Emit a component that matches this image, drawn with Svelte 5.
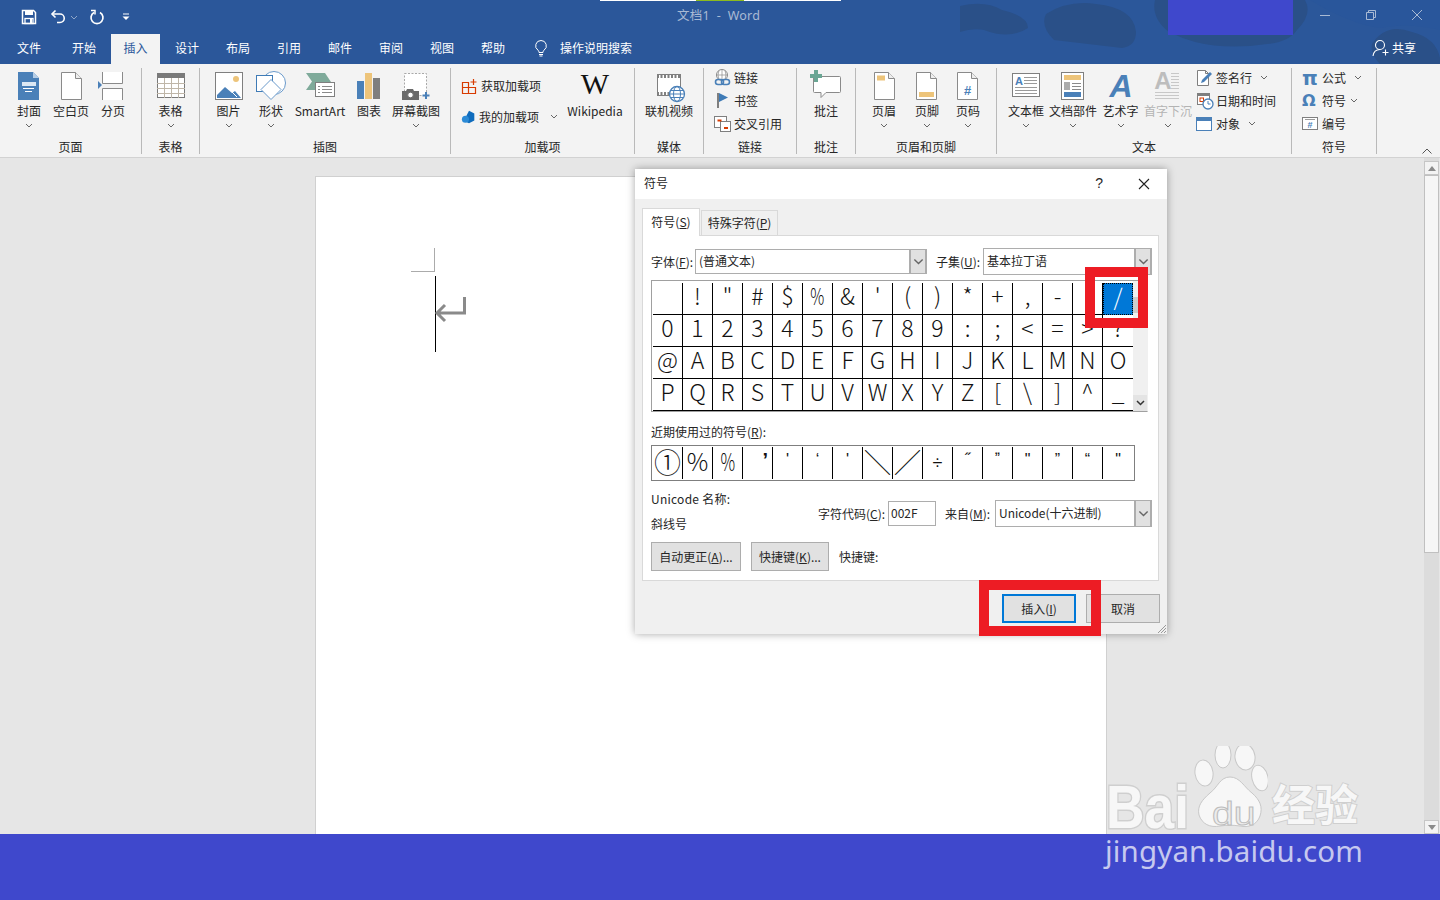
<script>
  const tabs = ['文件','开始','插入','设计','布局','引用','邮件','审阅','视图','帮助'];
  const rows = [
    [' ','!','"','#','$','%','&',"'",'(',')','*','+',',','-','.','/'],
    ['0','1','2','3','4','5','6','7','8','9',':',';','<','=','>','?'],
    ['@','A','B','C','D','E','F','G','H','I','J','K','L','M','N','O'],
    ['P','Q','R','S','T','U','V','W','X','Y','Z','[','\\',']','^','_']
  ];
  const chars = rows.flat();
  const recent = ['①','%','%','’',"'",'‘',"'",'╲','╱','÷','˝','ˮ','"','”','“','"'];
</script>

{#snippet chev()}
  <svg class="chev" viewBox="0 0 8 5"><path d="M1 1l3 3 3-3" fill="none" stroke="#666" stroke-width="1"/></svg>
{/snippet}

{#snippet big(label, w, icon, hasChev = true, dim = false)}
  <div class="big" class:dim style="width:{w}px">
    {@render icon()}
    <span class="blabel">{label}</span>
    {#if hasChev}{@render chev()}{/if}
  </div>
{/snippet}

{#snippet small(label, icon, caret = 0)}
  <div class="small">
    <span class="sicon">{@render icon()}</span>
    <span>{label}</span>
    {#if caret}<span class="scaret" style="margin-left:{caret}px">{@render chev()}</span>{/if}
  </div>
{/snippet}

{#snippet iCover()}<svg class="ic" viewBox="0 0 44 34"><path d="M11 4h15l6 6v22H11z" fill="#4a80b8"/><path d="M26 4l6 6h-6z" fill="#b5cde6"/><rect x="15" y="14" width="14" height="4" fill="#dce8f3"/><path d="M16 20.5h11M18 23.5h7" stroke="#fff"/></svg>{/snippet}
{#snippet iBlank()}<svg class="ic" viewBox="0 0 44 34"><path d="M12.5 4.5h14l6 6v21h-20z" fill="#fff" stroke="#8a8a8a"/><path d="M26.5 4.5v6h6" fill="#eee" stroke="#8a8a8a"/></svg>{/snippet}
{#snippet iBreak()}<svg class="ic" viewBox="0 0 44 34"><path d="M11.5 4v11.5h20V4M11.5 32V20.5h20V32" fill="#fff" stroke="#8a8a8a"/><path d="M7 13l4 4-4 4z" fill="#4a80b8"/></svg>{/snippet}
{#snippet iTable()}<svg class="ic" viewBox="0 0 44 34"><rect x="8.5" y="5.5" width="27" height="24" fill="#fff" stroke="#7a7a7a"/><rect x="8" y="5" width="28" height="5" fill="#7a7a7a"/><path d="M8 15.5h28M8 20.5h28M8 25.5h28M15.5 10v20M22.5 10v20M29.5 10v20" stroke="#bfb6a8" fill="none"/></svg>{/snippet}
{#snippet iPic()}<svg class="ic" viewBox="0 0 44 34"><rect x="8.5" y="4.5" width="27" height="27" fill="#fff" stroke="#7f7f7f"/><circle cx="29" cy="11" r="3" fill="#edc47a"/><path d="M10 30v-3l8-8 7 6 3-2 6 7z" fill="#4a80b8"/><path d="M21 20l9 9" stroke="#fff"/></svg>{/snippet}
{#snippet iShape()}<svg class="ic" viewBox="0 0 44 34"><circle cx="25" cy="15" r="11.5" fill="#fff" stroke="#6a9acb"/><rect x="7.5" y="7.5" width="16" height="16" fill="#fff" stroke="#3f7bb6"/><path d="M22 11.5l10 10-10 10-10-10z" fill="#fff" stroke="#6a9acb"/></svg>{/snippet}
{#snippet iSmart()}<svg class="ic" viewBox="0 0 44 34"><path d="M8 5h19l6 9H17v8H8l6-8.500z" fill="#7faa9a"/><rect x="17.500" y="14.500" width="19" height="14" fill="#fff" stroke="#7f7f7f"/><path d="M20 18.500h2M24 18.500h10M20 21.500h2M24 21.500h10M20 24.500h2M24 24.500h10" stroke="#8a8a8a"/></svg>{/snippet}
{#snippet iChart()}<svg class="ic" viewBox="0 0 44 34"><rect x="10" y="13" width="7" height="18" fill="#4a80b8"/><rect x="18" y="5" width="7" height="26" fill="#edc47a"/><rect x="26" y="10" width="7" height="21" fill="#7f7f7f"/></svg>{/snippet}
{#snippet iShot()}<svg class="ic" viewBox="0 0 44 34"><rect x="10.500" y="5.500" width="22" height="22" fill="#fff" stroke="#a8a8a8" stroke-dasharray="2 1.500"/><path d="M8 23h4l1-2h6l1 2h5v9H8z" fill="#6a6a6a"/><circle cx="16.500" cy="27" r="2.800" fill="#fff" stroke="#6a6a6a"/><path d="M32 24v7M28.500 27.500h7" stroke="#4a80b8" stroke-width="2"/></svg>{/snippet}
{#snippet iW()}<span class="wlogo">W</span>{/snippet}
{#snippet iVideo()}<svg class="ic" viewBox="0 0 44 34"><rect x="10.500" y="6.500" width="23" height="21" fill="#fff" stroke="#7f7f7f"/><path d="M10 8.500h24M10 25.500h24" stroke="#7f7f7f" stroke-width="3" stroke-dasharray="2 1.500"/><circle cx="30" cy="26" r="7.500" fill="#fff" stroke="#4a80b8" stroke-width="1.300"/><ellipse cx="30" cy="26" rx="3.500" ry="7.500" fill="none" stroke="#4a80b8"/><path d="M22.500 26h15M23.500 22.500h13M23.500 29.500h13" stroke="#4a80b8"/></svg>{/snippet}
{#snippet iComment()}<svg class="ic" viewBox="0 0 44 34"><path d="M9.500 8.500h26a1 1 0 0 1 1 1v14a1 1 0 0 1-1 1H22l-5 5v-5H10.500a1 1 0 0 1-1-1z" fill="#fff" stroke="#8a8a8a"/><path d="M12 2v12M6 8h12" stroke="#6aa694" stroke-width="4"/></svg>{/snippet}
{#snippet iHead()}<svg class="ic" viewBox="0 0 44 34"><path d="M12.500 4.500h14l6 6v21h-20z" fill="#fff" stroke="#8a8a8a"/><path d="M26.500 4.500v6h6" fill="#eee" stroke="#8a8a8a"/><rect x="15" y="7.500" width="8" height="5" fill="#edc47a"/></svg>{/snippet}
{#snippet iFoot()}<svg class="ic" viewBox="0 0 44 34"><path d="M11.500 4.500h14l6 6v21h-20z" fill="#fff" stroke="#8a8a8a"/><path d="M25.500 4.500v6h6" fill="#eee" stroke="#8a8a8a"/><rect x="14" y="24" width="15" height="5" fill="#edc47a"/></svg>{/snippet}
{#snippet iNum()}<svg class="ic" viewBox="0 0 44 34"><path d="M11.500 4.500h14l6 6v21h-20z" fill="#fff" stroke="#8a8a8a"/><path d="M25.500 4.500v6h6" fill="#eee" stroke="#8a8a8a"/><text x="21.500" y="27" class="svgt" font-size="13" font-weight="700" fill="#4a80b8" text-anchor="middle">#</text></svg>{/snippet}
{#snippet iTextbox()}<svg class="ic" viewBox="0 0 44 34"><rect x="8.500" y="5.500" width="27" height="23" fill="#fff" stroke="#7f7f7f"/><text x="15" y="17" class="svgt" font-size="11" font-weight="700" fill="#4a80b8" text-anchor="middle">A</text><path d="M20 9.500h13M20 12.500h13M20 15.500h13M11 19.500h22M11 22.500h22M11 25.500h22" stroke="#9a9a9a"/></svg>{/snippet}
{#snippet iParts()}<svg class="ic" viewBox="0 0 44 34"><rect x="10.500" y="4.500" width="22" height="27" fill="#fff" stroke="#7f7f7f"/><rect x="13" y="7" width="17" height="5" fill="#edc47a"/><rect x="13" y="14" width="6" height="8" fill="#ababab"/><path d="M21 15.500h9M21 18.500h9M21 21.500h9" stroke="#8a8a8a"/><rect x="13" y="24" width="17" height="5" fill="#4a80b8"/></svg>{/snippet}
{#snippet iArt()}<svg class="ic" viewBox="0 0 44 34"><text x="22" y="29" class="svgt" font-size="32" font-weight="700" font-style="italic" fill="#4a80b8" text-anchor="middle">A</text></svg>{/snippet}
{#snippet iDrop()}<svg class="ic" viewBox="0 0 44 34"><text x="17" y="21" class="svgt" font-size="24" font-weight="700" fill="#bdbdbd" text-anchor="middle">A</text><path d="M25 5.500h8M25 8.500h8M25 11.500h8M25 14.500h8M25 17.500h8M25 20.500h8M9 24.500h24M9 27.500h24M9 30.500h24" stroke="#c8c8c8"/></svg>{/snippet}

{#snippet sGet()}<svg width="18" height="18" viewBox="0 0 18 18"><path d="M1.500 5.500h6v5h-6zM1.500 10.500h6v6h-6zM7.500 10.500h7v6h-7zM7.500 5.500v5" fill="none" stroke="#d83b01" stroke-width="1.200"/><path d="M12.500 2v6M9.500 5h6" stroke="#d83b01" stroke-width="1.200"/></svg>{/snippet}
{#snippet sMine()}<svg width="18" height="18" viewBox="0 0 18 18"><path d="M9 2l6 3v8l-6 3-3-1.500V8z" fill="#0f6cbd"/><circle cx="5" cy="11.500" r="4" fill="#2b8ad6"/></svg>{/snippet}
{#snippet sLink()}<svg width="18" height="18" viewBox="0 0 18 18"><circle cx="8" cy="6" r="5.500" fill="#fff" stroke="#8a8a8a"/><path d="M2.500 6h11M8 .5v11M5 1.500q-2 4.500 0 9M11 1.500q2 4.500 0 9" stroke="#8a8a8a" fill="none" stroke-width=".7"/><rect x="1.500" y="10.500" width="8" height="5" rx="2.500" fill="none" stroke="#4a80b8" stroke-width="1.600"/><rect x="7.500" y="10.500" width="8" height="5" rx="2.500" fill="none" stroke="#4a80b8" stroke-width="1.600"/></svg>{/snippet}
{#snippet sMark()}<svg width="18" height="18" viewBox="0 0 18 18"><path d="M4 1v15" stroke="#7f7f7f" stroke-width="2"/><path d="M5 1l9 4.500L5 10z" fill="#3f7bb6"/></svg>{/snippet}
{#snippet sRef()}<svg width="18" height="18" viewBox="0 0 18 18"><rect x=".5" y="1.500" width="12" height="11" fill="#fff" stroke="#7f7f7f"/><rect x="6.500" y="6.500" width="10" height="10" fill="#fff" stroke="#7f7f7f"/><path d="M3.500 5.500h4M10 13h4" stroke="#d83b01" stroke-width="2"/></svg>{/snippet}
{#snippet sSig()}<svg width="18" height="18" viewBox="0 0 18 18"><path d="M1.500 1.500h8l3 3v12h-11z" fill="#fff" stroke="#7f7f7f"/><path d="M9.500 1.500v3h3" fill="none" stroke="#7f7f7f"/><path d="M5 14l1-3 8-8 2 2-8 8z" fill="#4a80b8"/></svg>{/snippet}
{#snippet sDate()}<svg width="18" height="18" viewBox="0 0 18 18"><rect x="1.500" y="1.500" width="12" height="11" fill="#fff" stroke="#7f7f7f"/><rect x="1" y="1" width="13" height="3" fill="#7f7f7f"/><rect x="4" y="6" width="3.500" height="3.500" fill="none" stroke="#d83b01"/><circle cx="12" cy="12" r="5" fill="#fff" stroke="#4a80b8" stroke-width="1.300"/><path d="M12 9v3h2.500" fill="none" stroke="#4a80b8"/></svg>{/snippet}
{#snippet sObj()}<svg width="18" height="18" viewBox="0 0 18 18"><rect x=".5" y="2.500" width="15" height="13" fill="#fff" stroke="#4a80b8"/><rect x="0" y="2" width="16" height="4" fill="#4a80b8"/></svg>{/snippet}
{#snippet sPi()}<span class="glyph pi">π</span>{/snippet}
{#snippet sOm()}<span class="glyph">Ω</span>{/snippet}
{#snippet sNo()}<svg width="18" height="16" viewBox="0 0 18 16"><rect x=".5" y="1.500" width="15" height="12" fill="#fff" stroke="#7f7f7f"/><path d="M3 3.500h10" stroke="#9a9a9a"/><text x="8" y="12" class="svgt" font-size="9" font-weight="700" fill="#4a80b8" text-anchor="middle">#</text></svg>{/snippet}

<div class="app">
  <header class="head">
    <svg class="clouds" viewBox="960 0 480 64" preserveAspectRatio="none">
      <path d="M960 6q25-6 42 4 26 6 26 18-18 12-44 2-12-2-24 2zM1046 14q22-14 50-10 38 4 40 28 0 14-14 16-34-4-68-8-14-14-8-26zM1155 0h150q8 14-8 30-8 12-30 14-40 6-72-2-14-4-26-10-18-14-14-32zM1372 44q14-22 40-12 24 6 28 26v6h-60q-10-10-8-20z" fill="#2a5088"/>
      <path d="M1310 0h130v30q-34-8-60-2-30-4-70-28z" fill="#29569b"/>
    </svg>
    <div class="progress"><span class="pgreen"></span></div>
    <div class="purple"></div>

    <div class="titlerow">
      <div class="qat">
        <svg class="q1" width="16" height="16" viewBox="0 0 16 16"><path d="M1.500 1.500h11l2 2v11h-13z" fill="none" stroke="#fff" stroke-width="1.500"/><rect x="4" y="2" width="8" height="4" fill="#fff"/><rect x="4" y="9.500" width="8" height="5" fill="none" stroke="#fff" stroke-width="1.300"/><rect x="9" y="10" width="2" height="4" fill="#fff"/></svg>
        <svg class="q2" width="16" height="16" viewBox="0 0 16 16"><path d="M5.500 1.500L2 5l3.500 3.500" fill="none" stroke="#fff" stroke-width="1.600"/><path d="M2.500 5H10a4 4 0 0 1 0 8.500H7" fill="none" stroke="#fff" stroke-width="1.600"/></svg>
        <svg class="q3" width="8" height="5" viewBox="0 0 8 5"><path d="M1 1l3 3 3-3" fill="none" stroke="#8fa6c8"/></svg>
        <svg class="q4" width="16" height="16" viewBox="0 0 16 16"><path d="M5 3.500a6 6 0 1 0 6 0" fill="none" stroke="#fff" stroke-width="1.700"/><path d="M2 1.500h4v4" fill="none" stroke="#fff" stroke-width="1.500"/></svg>
        <svg class="q5" width="8" height="8" viewBox="0 0 8 8"><path d="M1 1h6" stroke="#fff"/><path d="M.5 3.500h7L4 7z" fill="#fff"/></svg>
      </div>
      <div class="doctitle">文档1 &nbsp;-&nbsp; Word</div>
      <div class="winctl">
        <span class="wbtn"><svg width="12" height="12" viewBox="0 0 12 12"><path d="M1 6.500h10" stroke="#a9bad4"/></svg></span>
        <span class="wbtn"><svg width="12" height="12" viewBox="0 0 12 12"><path d="M1.500 3.500h7v7h-7zM3.500 3.500v-2h7v7h-2" fill="none" stroke="#a9bad4"/></svg></span>
        <span class="wbtn"><svg width="12" height="12" viewBox="0 0 12 12"><path d="M1 1l10 10M11 1L1 11" stroke="#a9bad4"/></svg></span>
      </div>
    </div>

    <div class="tabrow">
      <nav class="tabs">
        {#each tabs as t}
          <span class="tab" class:on={t === '插入'}>{t}</span>
        {/each}
      </nav>
      <svg class="bulb" width="14" height="18" viewBox="0 0 14 18"><path d="M7 1.500a5.300 5.300 0 0 0-3 9.700c.7.600 1 1.300 1 2.300h4c0-1 .3-1.700 1-2.300a5.300 5.300 0 0 0-3-9.700zM5 15.500h4M5.500 17h3" fill="none" stroke="#fff"/></svg>
      <span class="search">操作说明搜索</span>
      <span class="share">
        <svg width="18" height="18" viewBox="0 0 18 18"><circle cx="8" cy="6" r="4.500" fill="none" stroke="#fff" stroke-width="1.100"/><path d="M1 17c.5-4 3-6.500 7-6.500M13.500 10.500v6M10.500 13.500h6" fill="none" stroke="#fff" stroke-width="1.100"/></svg>
        共享
      </span>
    </div>
  </header>

  <section class="ribbon">
    <div class="group" style="width:142px">
      <div class="gbody pl8">
        {@render big('封面', 42, iCover)}
        {@render big('空白页', 42, iBlank, false)}
        {@render big('分页', 42, iBreak, false)}
      </div>
      <div class="glabel">页面</div>
    </div>
    <div class="group" style="width:58px">
      <div class="gbody center">{@render big('表格', 44, iTable)}</div>
      <div class="glabel">表格</div>
    </div>
    <div class="group" style="width:251px">
      <div class="gbody pl7">
        {@render big('图片', 43, iPic)}
        {@render big('形状', 42, iShape)}
        {@render big('SmartArt', 56, iSmart, false)}
        {@render big('图表', 42, iChart, false)}
        {@render big('屏幕截图', 52, iShot)}
      </div>
      <div class="glabel">插图</div>
    </div>
    <div class="group" style="width:184px">
      <div class="gbody">
        <div class="addins">
          <div class="addin">{@render sGet()}<span>获取加载项</span></div>
          <div class="addin">{@render sMine()}<span>我的加载项</span><span class="scaret addcaret">{@render chev()}</span></div>
        </div>
        {@render big('Wikipedia', 74, iW, false)}
      </div>
      <div class="glabel">加载项</div>
    </div>
    <div class="group" style="width:69px">
      <div class="gbody center">{@render big('联机视频', 52, iVideo, false)}</div>
      <div class="glabel">媒体</div>
    </div>
    <div class="group" style="width:93px">
      <div class="gbody stackwrap pl10">
        <div class="stack">
          {@render small('链接', sLink)}
          {@render small('书签', sMark)}
          {@render small('交叉引用', sRef)}
        </div>
      </div>
      <div class="glabel">链接</div>
    </div>
    <div class="group" style="width:59px">
      <div class="gbody center">{@render big('批注', 44, iComment, false)}</div>
      <div class="glabel">批注</div>
    </div>
    <div class="group" style="width:141px">
      <div class="gbody pl6">
        {@render big('页眉', 44, iHead)}
        {@render big('页脚', 42, iFoot)}
        {@render big('页码', 40, iNum)}
      </div>
      <div class="glabel">页眉和页脚</div>
    </div>
    <div class="group" style="width:295px">
      <div class="gbody pl6">
        {@render big('文本框', 46, iTextbox)}
        {@render big('文档部件', 48, iParts)}
        {@render big('艺术字', 47, iArt)}
        {@render big('首字下沉', 48, iDrop, true, true)}
        <div class="stack textstack">
          {@render small('签名行', sSig, 8)}
          {@render small('日期和时间', sDate)}
          {@render small('对象', sObj, 8)}
        </div>
      </div>
      <div class="glabel">文本</div>
    </div>
    <div class="group" style="width:85px">
      <div class="gbody pl10">
        <div class="stack symstack">
          {@render small('公式', sPi, 8)}
          {@render small('符号', sOm, 4)}
          {@render small('编号', sNo)}
        </div>
      </div>
      <div class="glabel">符号</div>
    </div>
    <svg class="collapse" width="10" height="6" viewBox="0 0 10 6"><path d="M.5 5.500L5 1l4.500 4.500" fill="none" stroke="#555"/></svg>
  </section>

  <main class="work">
    <div class="docarea">
      <div class="page">
        <div class="crop"></div>
        <div class="cursorline">
          <svg width="34" height="30" viewBox="0 0 34 30"><path d="M30.500 1v16H3M11 9l-8 8 8 8" fill="none" stroke="#8a8a8a" stroke-width="3"/></svg>
        </div>
      </div>
    </div>
    <div class="vscroll">
      <div class="vbtn"><svg width="8" height="5" viewBox="0 0 8 5"><path d="M0 5l4-5 4 5z" fill="#8a8a8a"/></svg></div>
      <div class="vthumb"></div>
      <div class="vspace"></div>
      <div class="vbtn"><svg width="8" height="5" viewBox="0 0 8 5"><path d="M0 0l4 5 4-5z" fill="#8a8a8a"/></svg></div>
    </div>
  </main>

  <footer class="foot"></footer>

  <div class="dialog">
    <div class="dtitle">
      <span>符号</span>
      <span class="help">?</span>
      <svg class="dclose" width="12" height="12" viewBox="0 0 12 12"><path d="M1 1l10 10M11 1L1 11" stroke="#222" stroke-width="1.100"/></svg>
    </div>
    <div class="dbody">
      <div class="dtabs">
        <span class="dtab active">符号(<u>S</u>)</span>
        <span class="dtab">特殊字符(<u>P</u>)</span>
      </div>
      <div class="panel">
        <div class="fontrow">
          <span class="l1">字体(<u>F</u>):</span>
          <div class="combo c1"><span class="val">(普通文本)</span><span class="drop">{@render chev()}</span></div>
          <span class="l2">子集(<u>U</u>):</span>
          <div class="combo c2"><span class="val">基本拉丁语</span><span class="drop">{@render chev()}</span></div>
        </div>
        <div class="chargrid">
          <div class="cells">
            {#each chars as c, i}
              <span class="cell" class:sel={i === 15}><span class:narrow={i === 5}>{c}</span></span>
            {/each}
          </div>
          <div class="gscroll">
            <div class="gs-btn"></div>
            <div class="gs-thumb"></div>
            <div class="gs-space"></div>
            <div class="gs-btn low"><svg width="9" height="6" viewBox="0 0 9 6"><path d="M1 1l3.500 3.500L8 1" fill="none" stroke="#333" stroke-width="1.500"/></svg></div>
          </div>
        </div>
        <div class="recentlabel">近期使用过的符号(<u>R</u>):</div>
        <div class="recent">
          {#each recent as c, i}
            <span class="rcell" class:circ={i === 0} class:big1={i === 1 || i === 2} class:line={i === 7 || i === 8} class:mid={i === 9} class:heavy={i === 3}><span class:narrow={i === 2}>{c}</span></span>
          {/each}
        </div>
        <div class="inforow">
          <div class="infoleft">
            <div class="uni">Unicode 名称:</div>
            <div class="slash">斜线号</div>
          </div>
          <div class="inforight">
            <span class="l3">字符代码(<u>C</u>):</span>
            <div class="codeinput">002F</div>
            <span class="l4">来自(<u>M</u>):</span>
            <div class="combo c3"><span class="val">Unicode(十六进制)</span><span class="drop">{@render chev()}</span></div>
          </div>
        </div>
        <div class="btnrow">
          <span class="btn b1">自动更正(<u>A</u>)...</span>
          <span class="btn b2">快捷键(<u>K</u>)...</span>
          <span>快捷键:</span>
        </div>
      </div>
      <div class="dfoot">
        <span class="btn act primary">插入(<u>I</u>)</span>
        <span class="btn act">取消</span>
      </div>
      <svg class="grip" width="10" height="10" viewBox="0 0 10 10"><path d="M9 1L1 9M9 4L4 9M9 7L7 9" stroke="#9a9a9a"/></svg>
    </div>
  </div>

  <div class="redbox r1"></div>
  <div class="redbox r2"></div>

  <div class="wm">
    <span class="wm-bai">Bai</span>
    <svg class="wm-paw" width="74" height="86" viewBox="0 0 74 86">
      <g fill="#f7f7f7" stroke="#c8c8c8" stroke-width="1">
        <ellipse cx="10" cy="27" rx="9" ry="13" transform="rotate(-8 10 27)"/>
        <ellipse cx="29" cy="9" rx="8" ry="13"/>
        <ellipse cx="51" cy="11" rx="10" ry="13" transform="rotate(-8 51 11)"/>
        <ellipse cx="66" cy="32" rx="8" ry="13" transform="rotate(-14 66 32)"/>
        <path d="M36 31c10 0 14 10 22 16 8 7 11 14 8 23-3 9-12 12-20 10-7-1-13-1-20 0-10 2-18-2-21-11-2-9 3-15 11-22 8-6 10-16 20-16z"/>
      </g>
    </svg>
    <span class="wm-du">du</span>
    <span class="wm-cn">经验</span>
    <span class="wm-url">jingyan.baidu.com</span>
  </div>
</div>

<style>
  :global(body) { margin: 0; }
  .app {
    position: relative; width: 1440px; height: 900px; overflow: hidden;
    display: flex; flex-direction: column;
    font-family: "Noto Sans CJK SC", "Noto Sans", sans-serif; font-size: 12px; color: #262626;
  }
  .head { position: relative; flex: 0 0 64px; background: #2b579a; color: #fff; overflow: hidden; }
  .clouds { position: absolute; left: 960px; top: 0; width: 480px; height: 64px; }
  .progress { position: absolute; left: 600px; top: 0; width: 241px; height: 1px; background: #fff; }
  .pgreen { position: absolute; left: 96px; top: 0; width: 48px; height: 1px; background: #8dbb1e; }
  .purple { position: absolute; left: 1168px; top: 0; width: 125px; height: 35px; background: #3f48cc; }

  .titlerow { position: relative; height: 34px; display: flex; align-items: center; }
  .qat { flex: 0 0 677px; display: flex; align-items: center; padding-left: 21px; box-sizing: border-box; }
  .q2 { margin-left: 13px; } .q3 { margin-left: 4px; } .q4 { margin-left: 11px; } .q5 { margin-left: 17px; }
  .doctitle { color: #a9bad4; font-family: "Noto Sans", "Noto Sans CJK SC", sans-serif; font-size: 12.500px; white-space: nowrap; letter-spacing: .2px; margin-top: -5px; }
  .winctl { margin-left: auto; display: flex; margin-top: -4px; }
  .wbtn { width: 46px; display: flex; justify-content: center; }

  .tabrow { position: relative; height: 30px; display: flex; align-items: center; padding-left: 5px; }
  .tabs { display: flex; gap: 3px; height: 30px; }
  .tab { width: 48px; display: flex; align-items: center; justify-content: center; padding-bottom: 4px; box-sizing: border-box; }
  .tab:first-child { margin-right: 4px; }
  .tab.on { width: 49px; background: #f3f3f3; color: #2b579a; }
  .bulb { margin-left: 17px; margin-top: -2px; }
  .search { margin-left: 12px; margin-top: -4px; }
  .share { margin-left: auto; margin-right: 24px; display: flex; align-items: center; gap: 2px; margin-top: -3px; }

  .ribbon { position: relative; flex: 0 0 94px; box-sizing: border-box; background: #f3f3f3; border-bottom: 1px solid #d2d2d2; display: flex; align-items: flex-start; }
  .group { box-sizing: border-box; height: 86px; margin-top: 4px; border-right: 1px solid #b9b9b9; display: flex; flex-direction: column; }
  .gbody { height: 72px; display: flex; align-items: flex-start; }
  .center { justify-content: center; }
  .pl6 { padding-left: 6px; } .pl7 { padding-left: 7px; } .pl8 { padding-left: 8px; } .pl10 { padding-left: 10px; }
  .glabel { height: 14px; line-height: 14px; text-align: center; }
  .big { display: flex; flex-direction: column; align-items: center; flex: none; white-space: nowrap; }
  .big.dim { color: #b3b3b3; }
  .ic { width: 44px; height: 34px; flex: none; display: block; overflow: visible; }
  .blabel { height: 18px; line-height: 18px; }
  .chev { width: 8px; height: 5px; display: block; margin-top: 3px; }
  .svgt { font-family: "Liberation Sans", sans-serif; }
  .wlogo { height: 34px; line-height: 32px; font-family: "Liberation Serif", serif; font-size: 30px; color: #111; }

  .addins { width: 107px; box-sizing: border-box; padding: 2px 0 0 10px; flex: none; }
  .addin { height: 31px; display: flex; align-items: center; gap: 2px; white-space: nowrap; }
  .addcaret { margin-left: 9px; }
  .stack { display: flex; flex-direction: column; margin-top: -2px; flex: none; }
  .small { height: 23px; display: flex; align-items: center; white-space: nowrap; }
  .sicon { width: 20px; display: flex; align-items: center; flex: none; }
  .scaret { display: flex; align-items: center; margin-top: -3px; }
  .textstack { margin-left: 4px; }
  .glyph { font-family: "DejaVu Sans", sans-serif; font-weight: 700; font-size: 16px; line-height: 18px; color: #4a80b8; }
  .glyph.pi { font-size: 20px; }
  .collapse { margin-left: auto; margin-right: 8px; margin-top: 84px; }

  .work { flex: 1; min-height: 0; background: #e6e6e6; display: flex; }
  .docarea { flex: 0 0 1424px; padding-top: 19px; box-sizing: border-box; display: flex; justify-content: center; overflow: hidden; }
  .page { width: 792px; height: 800px; flex: none; box-sizing: border-box; background: #fff; border: 1px solid #d0d0d0; margin: -1px 0 0 -2px; }
  .crop { width: 23px; height: 23px; margin: 71px 0 0 95px; border-right: 1px solid #ababab; border-bottom: 1px solid #ababab; }
  .cursorline { margin: 4px 0 0 119px; width: 34px; height: 76px; border-left: 1px solid #000; display: flex; align-items: flex-start; }
  .cursorline svg { margin: 20px 0 0 -2px; }
  .vscroll { width: 15px; padding-top: 3px; box-sizing: border-box; background: #dcdcdc; display: flex; flex-direction: column; }
  .vbtn { height: 14px; flex: none; box-sizing: border-box; background: #f3f3f3; border: 1px solid #c6c6c6; display: flex; align-items: center; justify-content: center; }
  .vthumb { height: 378px; flex: none; box-sizing: border-box; background: #f6f6f6; border: 1px solid #c0c0c0; }
  .vspace { flex: 1; }

  .foot { flex: 0 0 66px; background: #3f48cc; }

  .dialog { position: absolute; left: 635px; top: 169px; width: 532px; height: 465px; display: flex; flex-direction: column; box-shadow: 0 0 8px rgba(0,0,0,.35); background: #f0f0f0; }
  .dtitle { height: 30px; flex: none; box-sizing: border-box; background: #fff; display: flex; align-items: center; padding: 0 0 3px 9px; font-size: 12px; }
  .help { margin-left: auto; font-family: "Liberation Sans", sans-serif; font-size: 14px; }
  .dclose { margin: 2px 17px 0 35px; }
  .dbody { position: relative; flex: 1; padding: 9px 0 0 7px; box-sizing: border-box; }
  .dtabs { display: flex; height: 27px; align-items: flex-end; }
  .dtab { box-sizing: border-box; height: 25px; width: 77px; line-height: 23px; text-align: center; background: #f0f0f0; border: 1px solid #d9d9d9; border-bottom: 0; white-space: nowrap; }
  .dtab.active { position: relative; z-index: 1; height: 28px; width: 58px; margin-right: 1px; margin-bottom: -1px; background: #fff; line-height: 26px; }
  .panel { box-sizing: border-box; width: 517px; height: 346px; background: #fff; border: 1px solid #d9d9d9; padding: 12px 0 0 8px; }
  .fontrow { height: 27px; display: flex; align-items: center; white-space: nowrap; }
  .l1 { width: 44px; margin-top: -1px; }
  .l2 { width: 47px; margin-left: 9px; margin-top: -1px; }
  .combo { box-sizing: border-box; display: flex; align-items: stretch; border: 1px solid #adadad; background: #fff; }
  .c1 { width: 232px; height: 25px; }
  .c2 { width: 169px; height: 27px; }
  .c3 { width: 157px; height: 27px; }
  .val { flex: 1; padding-left: 3px; line-height: 22px; white-space: nowrap; }
  .c2 .val, .c3 .val { line-height: 24px; }
  .drop { box-sizing: border-box; width: 18px; background: #e1e1e1; border: 1px solid #adadad; border-width: 1px 2px 1px 2px; margin: -1px -1px -1px 0; display: flex; align-items: center; justify-content: center; }
  .drop .chev { margin: 0; width: 11px; height: 7px; }

  .chargrid { margin-top: 5px; width: 497px; height: 132px; box-sizing: border-box; border: 1px solid #a0a0a0; border-right-color: #f0f0f0; display: flex; }
  .cells { padding: 2px 0 0 1px; display: grid; grid-template-columns: repeat(16, 30px); grid-auto-rows: 32px; flex: none; }
  .cell { box-sizing: border-box; border-right: 1px solid #000; border-bottom: 1px solid #000; padding-bottom: 6px; display: flex; align-items: center; justify-content: center; font-family: "Noto Sans CJK SC", sans-serif; font-weight: 300; font-size: 23px; line-height: 1; color: #111; white-space: pre; }
  .cell:nth-child(16n) { border-right: 0; }
  .cell.sel { background: #0078d7; color: #fff; outline: 1px dotted #000; outline-offset: -1px; border: 0; }
  .narrow { display: inline-block; transform: scaleX(.68); }
  .gscroll { flex: 1; background: #f0f0f0; display: flex; flex-direction: column; }
  .gs-btn { height: 16px; flex: none; display: flex; align-items: center; justify-content: center; }
  .gs-btn.low { background: #e4e4e4; }
  .gs-thumb { height: 16px; flex: none; background: #cdcdcd; }
  .gs-space { flex: 1; }

  .recentlabel { margin-top: 11px; height: 18px; line-height: 18px; }
  .recent { margin-top: 4px; width: 484px; height: 36px; box-sizing: border-box; border: 1px solid #7f7f7f; padding: 1px 0 1px 1px; display: flex; }
  .rcell { width: 30px; flex: none; box-sizing: border-box; border-right: 1px solid #000; padding-top: 3px; display: flex; justify-content: center; align-items: flex-start; font-family: "Liberation Sans", sans-serif; font-size: 16px; line-height: 20px; color: #111; }
  .rcell:last-child { border-right: 0; }
  .rcell.big1 { padding-top: 0; font-family: "Noto Sans CJK SC", sans-serif; font-weight: 300; font-size: 24px; line-height: 28px; }
  .rcell.circ { padding-top: 0; font-family: "Noto Sans CJK SC", sans-serif; font-weight: 300; font-size: 27px; line-height: 29px; }
  .rcell.line { padding-top: 0; font-family: "Noto Sans CJK SC", sans-serif; font-weight: 300; font-size: 25px; line-height: 29px; }
  .rcell.mid { padding-top: 0; font-size: 18px; line-height: 32px; }
  .rcell.heavy { font-weight: 700; font-size: 20px; justify-content: flex-end; padding-right: 4px; }

  .inforow { height: 61px; display: flex; white-space: nowrap; }
  .infoleft { width: 167px; flex: none; padding-top: 9px; box-sizing: border-box; line-height: 18px; }
  .uni { letter-spacing: .25px; }
  .slash { margin-top: 7px; }
  .inforight { padding-top: 19px; display: flex; align-items: center; height: 27px; }
  .l3 { width: 70px; flex: none; }
  .l4 { width: 50px; margin-left: 9px; flex: none; }
  .codeinput { box-sizing: border-box; width: 48px; height: 25px; border: 1px solid #adadad; line-height: 21px; padding-left: 2px; }
  .btnrow { display: flex; align-items: center; gap: 10px; height: 29px; white-space: nowrap; }
  .btn { box-sizing: border-box; height: 29px; display: flex; align-items: center; justify-content: center; background: #e1e1e1; border: 1px solid #adadad; white-space: pre; }
  .b1 { width: 90px; } .b2 { width: 78px; }
  .dfoot { display: flex; justify-content: flex-end; gap: 10px; padding: 13px 7px 0 0; }
  .act { width: 74px; }
  .primary { border: 2px solid #0078d7; }
  .grip { position: absolute; right: 0; bottom: 0; }

  .redbox { position: absolute; box-sizing: border-box; border: 10px solid #ed1c24; }
  .r1 { left: 1085px; top: 267px; width: 63px; height: 61px; }
  .r2 { left: 979px; top: 580px; width: 122px; height: 56px; }

  .wm { position: absolute; inset: 0; pointer-events: none; }
  .wm span, .wm svg { position: absolute; }
  .wm-bai { left: 1106px; top: 779px; font: 700 62px/.9 "Liberation Sans", sans-serif; color: #f7f7f7; -webkit-text-stroke: 3px #cfcfcf; paint-order: stroke fill; transform: scaleX(.86); transform-origin: left top; }
  .wm-paw { left: 1194px; top: 746px; }
  .wm-du { left: 1212px; top: 793px; font: 400 34px/1.2 "Liberation Sans", sans-serif; color: #ececec; -webkit-text-stroke: 1px #bdbdbd; transform: scaleX(1.15); transform-origin: left top; }
  .wm-cn { left: 1272px; top: 775px; font: 700 43px/1.3 "Noto Sans CJK SC", sans-serif; color: #f7f7f7; -webkit-text-stroke: 2px #cfcfcf; paint-order: stroke fill; white-space: nowrap; }
  .wm-url { left: 1105px; top: 836px; font: 400 29.500px/1 "Noto Sans", sans-serif; letter-spacing: .15px; color: #c6c9ef; white-space: nowrap; }
</style>
